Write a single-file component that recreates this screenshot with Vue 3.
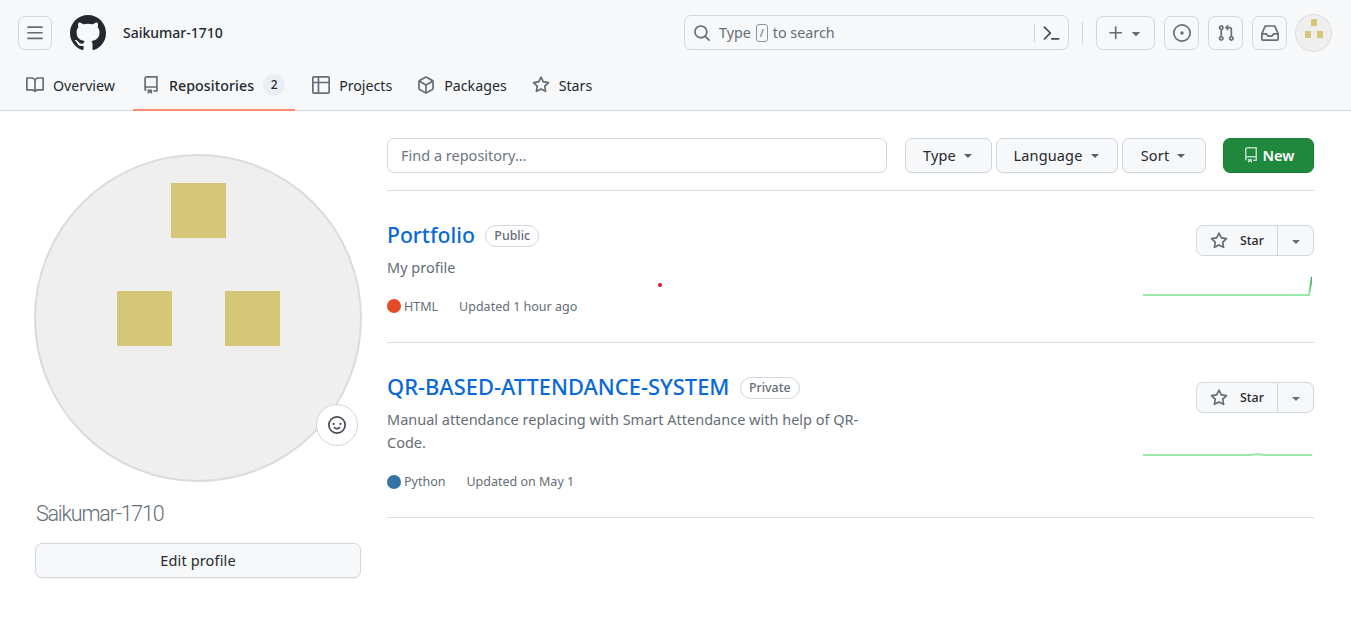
<script setup>
const P = {
  bars: 'M1 2.75A.75.75 0 0 1 1.75 2h12.5a.75.75 0 0 1 0 1.5H1.75A.75.75 0 0 1 1 2.75Zm0 5A.75.75 0 0 1 1.75 7h12.5a.75.75 0 0 1 0 1.5H1.75A.75.75 0 0 1 1 7.75ZM1.75 12h12.5a.75.75 0 0 1 0 1.5H1.75a.75.75 0 0 1 0-1.5Z',
  github: 'M8 0c4.42 0 8 3.58 8 8a8.013 8.013 0 0 1-5.45 7.59c-.4.08-.55-.17-.55-.38 0-.27.01-1.13.01-2.2 0-.75-.25-1.23-.54-1.48 1.78-.2 3.65-.88 3.65-3.95 0-.88-.31-1.59-.82-2.15.08-.2.36-1.02-.08-2.12 0 0-.67-.22-2.2.82-.64-.18-1.32-.27-2-.27-.68 0-1.36.09-2 .27-1.53-1.03-2.2-.82-2.2-.82-.44 1.1-.16 1.92-.08 2.12-.51.56-.82 1.28-.82 2.15 0 3.06 1.86 3.75 3.64 3.95-.23.2-.44.55-.51 1.07-.46.21-1.61.55-2.33-.66-.15-.24-.6-.83-1.23-.82-.67.01-.27.38.01.53.34.19.73.9.82 1.13.16.45.68 1.31 2.69.94 0 .67.01 1.3.01 1.49 0 .21-.15.45-.55.38A7.995 7.995 0 0 1 0 8c0-4.42 3.58-8 8-8Z',
  book: 'M0 1.75A.75.75 0 0 1 .75 1h4.253c1.227 0 2.317.59 3 1.501A3.743 3.743 0 0 1 11.006 1h4.245a.75.75 0 0 1 .75.75v10.5a.75.75 0 0 1-.75.75h-4.507a2.25 2.25 0 0 0-1.591.659l-.622.621a.75.75 0 0 1-1.06 0l-.622-.621A2.25 2.25 0 0 0 5.258 13H.75a.75.75 0 0 1-.75-.75Zm7.251 10.324.004-5.073-.002-2.253A2.25 2.25 0 0 0 5.003 2.5H1.5v9h3.757a3.75 3.75 0 0 1 1.994.574ZM8.755 4.75l-.004 7.322a3.752 3.752 0 0 1 1.992-.572H14.5v-9h-3.495a2.25 2.25 0 0 0-2.25 2.25Z',
  repo: 'M2 2.5A2.5 2.5 0 0 1 4.5 0h8.75a.75.75 0 0 1 .75.75v12.5a.75.75 0 0 1-.75.75h-2.5a.75.75 0 0 1 0-1.5h1.75v-2h-8a1 1 0 0 0-.714 1.7.75.75 0 1 1-1.072 1.05A2.495 2.495 0 0 1 2 11.5Zm10.5-1h-8a1 1 0 0 0-1 1v6.708A2.486 2.486 0 0 1 4.5 9h8ZM5 12.25a.25.25 0 0 1 .25-.25h3.5a.25.25 0 0 1 .25.25v3.25a.25.25 0 0 1-.4.2l-1.45-1.087a.249.249 0 0 0-.3 0L5.4 15.7a.25.25 0 0 1-.4-.2Z',
  table: 'M0 1.75C0 .784.784 0 1.75 0h12.5C15.216 0 16 .784 16 1.75v12.5A1.75 1.75 0 0 1 14.25 16H1.75A1.75 1.75 0 0 1 0 14.25ZM6.5 6.5v8h7.75a.25.25 0 0 0 .25-.25V6.5Zm8-1.5V1.75a.25.25 0 0 0-.25-.25H6.5V5Zm-13 1.5v7.75c0 .138.112.25.25.25H5v-8ZM5 5V1.5H1.75a.25.25 0 0 0-.25.25V5Z',
  pkg: 'm8.878.392 5.25 3.045c.54.314.872.89.872 1.514v6.098a1.75 1.75 0 0 1-.872 1.514l-5.25 3.045a1.75 1.75 0 0 1-1.756 0l-5.25-3.045A1.75 1.75 0 0 1 1 11.049V4.951c0-.624.332-1.201.872-1.514L7.122.392a1.75 1.75 0 0 1 1.756 0ZM7.875 1.69l-4.63 2.685L8 7.133l4.755-2.758-4.63-2.685a.248.248 0 0 0-.25 0ZM2.5 5.677v5.372c0 .09.047.171.125.216l4.625 2.683V8.432Zm6.25 8.271 4.625-2.683a.25.25 0 0 0 .125-.216V5.677L8.75 8.432Z',
  star: 'M8 .25a.75.75 0 0 1 .673.418l1.882 3.815 4.21.612a.75.75 0 0 1 .416 1.279l-3.046 2.97.719 4.192a.751.751 0 0 1-1.088.791L8 12.347l-3.766 1.98a.75.75 0 0 1-1.088-.79l.72-4.194L.818 6.374a.75.75 0 0 1 .416-1.28l4.21-.611L7.327.668A.75.75 0 0 1 8 .25Zm0 2.445L6.615 5.5a.75.75 0 0 1-.564.41l-3.097.45 2.24 2.184a.75.75 0 0 1 .216.664l-.528 3.084 2.769-1.456a.75.75 0 0 1 .698 0l2.77 1.456-.53-3.084a.75.75 0 0 1 .216-.664l2.24-2.183-3.096-.45a.75.75 0 0 1-.564-.41L8 2.694Z',
  search: 'M10.68 11.74a6 6 0 0 1-7.922-8.982 6 6 0 0 1 8.982 7.922l3.04 3.04a.749.749 0 0 1-.326 1.275.749.749 0 0 1-.734-.215ZM11.5 7a4.499 4.499 0 1 0-8.997 0A4.499 4.499 0 0 0 11.5 7Z',
  term: 'm6.354 8.04-4.773 4.773a.75.75 0 1 0 1.061 1.06L7.945 8.57a.75.75 0 0 0 0-1.06L2.642 2.206a.75.75 0 0 0-1.06 1.061L6.353 8.04ZM8.75 12.5a.75.75 0 0 0 0 1.5h6a.75.75 0 0 0 0-1.5h-6Z',
  plus: 'M7.75 2a.75.75 0 0 1 .75.75V7h4.25a.75.75 0 0 1 0 1.5H8.5v4.25a.75.75 0 0 1-1.5 0V8.5H2.75a.75.75 0 0 1 0-1.5H7V2.75A.75.75 0 0 1 7.75 2Z',
  caret: 'm4.427 7.427 3.396 3.396a.25.25 0 0 0 .354 0l3.396-3.396A.25.25 0 0 0 11.396 7H4.604a.25.25 0 0 0-.177.427Z',
  issue: 'M8 9.5a1.5 1.5 0 1 0 0-3 1.5 1.5 0 0 0 0 3ZM8 0a8 8 0 1 1 0 16A8 8 0 0 1 8 0ZM1.5 8a6.5 6.5 0 1 0 13 0 6.5 6.5 0 0 0-13 0Z',
  pr: 'M1.5 3.25a2.25 2.25 0 1 1 3 2.122v5.256a2.251 2.251 0 1 1-1.5 0V5.372A2.25 2.25 0 0 1 1.5 3.25Zm5.677-.177L9.573.677A.25.25 0 0 1 10 .854V2.5h1A2.5 2.5 0 0 1 13.5 5v5.628a2.251 2.251 0 1 1-1.5 0V5a1 1 0 0 0-1-1h-1v1.646a.25.25 0 0 1-.427.177L7.177 3.427a.25.25 0 0 1 0-.354ZM3.75 2.5a.75.75 0 1 0 0 1.5.75.75 0 0 0 0-1.5Zm0 9.5a.75.75 0 1 0 0 1.5.75.75 0 0 0 0-1.5Zm8.25.75a.75.75 0 1 0 1.5 0 .75.75 0 0 0-1.5 0Z',
  inbox: 'M2.8 2.06A1.75 1.75 0 0 1 4.41 1h7.18c.7 0 1.333.417 1.61 1.06l2.74 6.395c.04.093.06.194.06.295v4.5A1.75 1.75 0 0 1 14.25 15H1.75A1.75 1.75 0 0 1 0 13.25v-4.5c0-.101.02-.202.06-.295Zm1.61.44a.25.25 0 0 0-.23.152L1.887 8H4.75a.75.75 0 0 1 .6.3L6.625 10h2.75l1.275-1.7a.75.75 0 0 1 .6-.3h2.863L11.82 2.652a.25.25 0 0 0-.23-.152Zm10.09 7h-2.875l-1.275 1.7a.75.75 0 0 1-.6.3h-3.5a.75.75 0 0 1-.6-.3L4.375 9.5H1.5v3.75c0 .138.112.25.25.25h12.5a.25.25 0 0 0 .25-.25Z',
  smiley: 'M8 0a8 8 0 1 1 0 16A8 8 0 0 1 8 0ZM1.5 8a6.5 6.5 0 1 0 13 0 6.5 6.5 0 0 0-13 0Zm3.82 1.636a.75.75 0 0 1 1.038.175l.007.009c.103.118.22.222.35.31.264.178.683.37 1.285.37.602 0 1.02-.192 1.285-.371.13-.088.247-.192.35-.31l.007-.008a.75.75 0 0 1 1.222.87l-.022-.015c.02.013.021.015.021.015v.001l-.001.002-.002.003-.005.007-.014.019a2.066 2.066 0 0 1-.184.213c-.16.166-.338.316-.53.445-.63.418-1.37.638-2.127.629-.946 0-1.652-.308-2.126-.63a3.331 3.331 0 0 1-.715-.657l-.014-.02-.005-.006-.002-.003v-.002h-.001l.613-.432-.614.43a.75.75 0 0 1 .183-1.044ZM12 7a1 1 0 1 1-2 0 1 1 0 0 1 2 0ZM5 8a1 1 0 1 1 0-2 1 1 0 0 1 0 2Z'
}
const tabs = [
  { label: 'Overview', icon: P.book },
  { label: 'Repositories', icon: P.repo, count: 2, active: true },
  { label: 'Projects', icon: P.table },
  { label: 'Packages', icon: P.pkg },
  { label: 'Stars', icon: P.star }
]
const filters = ['Type', 'Language', 'Sort']
const repos = [
  {
    name: 'Portfolio', vis: 'Public', desc: ['My profile'], lang: 'HTML', color: '#e34c26',
    updated: 'Updated 1 hour ago', spark: 'M0 19 H166 L169 1', cls: 'one'
  },
  {
    name: 'QR-BASED-ATTENDANCE-SYSTEM', vis: 'Private',
    desc: ['Manual attendance replacing with Smart Attendance with help of QR-', 'Code.'],
    lang: 'Python', color: '#3572a5', updated: 'Updated on May 1', spark: 'M0 19 H108 Q114 17.4 120 19 H169', cls: 'two'
  }
]
</script>

<template>
  <div class="page">
    <header class="header">
      <div class="top">
        <button class="iconbtn burger"><svg class="i" viewBox="0 0 16 16"><path :d="P.bars" /></svg></button>
        <svg class="logo" viewBox="0 0 16 16"><path :d="P.github" /></svg>
        <span class="user">Saikumar-1710</span>
        <div class="search">
          <svg class="i" viewBox="0 0 16 16"><path :d="P.search" /></svg>
          <span class="ph">Type <kbd>/</kbd> to search</span>
          <span class="sep"></span>
          <svg class="i term" viewBox="0 0 16 16"><path :d="P.term" /></svg>
        </div>
        <span class="vdiv"></span>
        <button class="iconbtn plus">
          <svg class="i" viewBox="0 0 16 16"><path :d="P.plus" /></svg>
          <svg class="i" viewBox="0 0 16 16"><path :d="P.caret" /></svg>
        </button>
        <button class="iconbtn"><svg class="i" viewBox="0 0 16 16"><path :d="P.issue" /></svg></button>
        <button class="iconbtn"><svg class="i" viewBox="0 0 16 16"><path :d="P.pr" /></svg></button>
        <button class="iconbtn"><svg class="i" viewBox="0 0 16 16"><path :d="P.inbox" /></svg></button>
        <div class="mini">
          <span class="ms a"></span>
          <span class="mrow"><span class="ms"></span><span class="ms"></span></span>
        </div>
      </div>
      <nav class="tabs">
        <a v-for="t in tabs" :key="t.label" class="tab" :class="{ active: t.active }">
          <svg class="i" viewBox="0 0 16 16"><path :d="t.icon" /></svg>
          <span class="tlabel">{{ t.label }}</span>
          <span v-if="t.count" class="count">{{ t.count }}</span>
        </a>
      </nav>
    </header>

    <main class="main">
      <aside class="side">
        <div class="avatar">
          <span class="sq"></span>
          <span class="sqrow"><span class="sq"></span><span class="sq"></span></span>
          <button class="emoji"><svg class="i" viewBox="0 0 16 16"><path :d="P.smiley" /></svg></button>
        </div>
        <div class="name">Saikumar-1710</div>
        <button class="btn edit">Edit profile</button>
      </aside>

      <section class="content">
        <div class="toolbar">
          <div class="find">Find a repository…</div>
          <div class="filters">
            <button v-for="f in filters" :key="f" class="btn filter">
              {{ f }}<svg class="caret" viewBox="0 0 16 16"><path :d="P.caret" /></svg>
            </button>
          </div>
          <button class="newbtn"><svg class="i" viewBox="0 0 16 16"><path :d="P.repo" /></svg>New</button>
        </div>

        <article v-for="r in repos" :key="r.name" class="repo" :class="r.cls">
          <div class="info">
            <div class="title">
              <a class="rname">{{ r.name }}</a>
              <span class="vis">{{ r.vis }}</span>
            </div>
            <p class="desc"><span v-for="d in r.desc" :key="d" class="dline">{{ d }}</span></p>
            <div class="meta">
              <span class="dot" :style="{ background: r.color }"></span>
              <span class="lang">{{ r.lang }}</span>
              <span class="upd">{{ r.updated }}</span>
            </div>
          </div>
          <div class="aside">
            <div class="star">
              <span class="sl"><svg class="i" viewBox="0 0 16 16"><path :d="P.star" /></svg>Star</span>
              <span class="sr"><svg class="i" viewBox="0 0 16 16"><path :d="P.caret" /></svg></span>
            </div>
            <svg class="spark" viewBox="0 0 169 20" width="169" height="20">
              <defs>
                <linearGradient :id="'g-' + r.cls" gradientUnits="userSpaceOnUse" x1="0" y1="20" x2="0" y2="0">
                  <stop offset="0.1" stop-color="#9be9a8" />
                  <stop offset="0.4" stop-color="#6fcf87" />
                  <stop offset="1" stop-color="#30a14e" />
                </linearGradient>
              </defs>
              <path :d="r.spark" :stroke="'url(#g-' + r.cls + ')'" />
            </svg>
          </div>
        </article>
      </section>
    </main>
    <span class="reddot"></span>
  </div>
</template>

<style>
html, body { margin: 0; background: #fff; }
</style>

<style scoped>
.page {
  width: 1351px; height: 630px; overflow: hidden; position: relative;
  font-family: "Noto Sans", "Open Sans", sans-serif; color: #24292f; background: #fff;
}
button { font-family: inherit; padding: 0; margin: 0; cursor: pointer; }
.i { width: 18px; height: 18px; fill: #656d76; flex: none; display: block; }

.header { height: 110px; background: #f6f8fa; border-bottom: 1px solid #d0d7de; }
.top { display: flex; align-items: center; height: 65px; padding: 0 19px 0 18px; }
.iconbtn {
  width: 35px; height: 34px; box-sizing: border-box; border: 1px solid #d0d7de; border-radius: 7px;
  background: transparent; display: flex; align-items: center; justify-content: center; margin-left: 9px;
}
.burger { width: 34px; margin-left: 0; }
.logo { width: 36px; height: 36px; fill: #24292f; margin-left: 18px; flex: none; }
.user { font-size: 14px; font-weight: 500; margin-left: 17px; width: 561px; flex: none; white-space: nowrap; }
.search {
  width: 385px; height: 35px; box-sizing: border-box; border: 1px solid #d0d7de; border-radius: 7px;
  display: flex; align-items: center; padding: 0 8px; flex: none;
}
.ph { font-size: 14.3px; color: #656d76; margin-left: 8px; flex: 1; display: flex; align-items: center; gap: 5px; white-space: nowrap; }
kbd {
  font: inherit; font-size: 11px; width: 10px; height: 16px; line-height: 15px; text-align: center;
  border: 1px solid #8c959f; border-radius: 3px; display: inline-block;
}
.sep { width: 1px; height: 18px; background: #d0d7de; margin-right: 7px; }
.term { fill: #424a53; }
.vdiv { width: 1px; height: 22px; background: #d0d7de; margin: 0 13px; flex: none; }
.plus { width: 59px; margin-left: 0; gap: 2px; margin-right: 0; }

.mini {
  width: 37px; height: 38px; box-sizing: border-box; margin-left: 8px; border-radius: 50%;
  background: #efefef; border: 1px solid #dcdcdc; display: flex; flex-direction: column;
  align-items: center; padding-top: 4px; gap: 5px; flex: none;
}
.ms { width: 6px; height: 7px; background: #d4c777; display: block; }
.mrow { display: flex; gap: 6px; }

.tabs { display: flex; height: 45px; padding-left: 18px; }
.tab {
  display: flex; align-items: center; box-sizing: border-box; height: 46px; padding: 0 8px 4px; margin-right: 9px;
  font-size: 14.2px; color: #24292f; border-bottom: 2px solid transparent;
}
.tab:first-child { margin-right: 10px; }
.tab .i { margin-right: 9px; }
.tab.active { border-bottom-color: #fd8c73; font-weight: 550; padding: 0 10px 4px 9px; margin-right: 9px; }
.tab.active .tlabel { letter-spacing: 0.08px; }
.count {
  font-size: 12px; font-weight: 500; background: #eaeef2; border-radius: 11px; width: 22px; height: 22px;
  line-height: 22px; text-align: center; margin-left: 9px;
}

.main { display: flex; padding-left: 35px; }
.side { width: 326px; flex: none; padding-top: 43px; }
.avatar {
  width: 328px; height: 328px; margin-left: -1px; box-sizing: border-box; border-radius: 50%; background: #efefef; border: 2px solid #d8dce0;
  display: flex; flex-direction: column; align-items: center; padding-top: 27px; gap: 53px; position: relative;
}
.sq { width: 55px; height: 55px; background: #d4c777; display: block; }
.sqrow { display: flex; gap: 53px; }
.emoji {
  position: absolute; right: 2px; bottom: 34px; width: 42px; height: 42px; border-radius: 50%;
  background: #fff; border: 1px solid #d0d7de; display: flex; align-items: center; justify-content: center;
}
.emoji .i { fill: #424a53; }
.name { font-family: Roboto, sans-serif; font-size: 21.5px; font-weight: 300; color: #656d76; margin: 16px 0 13px 1px; line-height: 32px; white-space: nowrap; letter-spacing: -1.2px; }
.btn {
  box-sizing: border-box; height: 35px; border: 1px solid #d0d7de; border-radius: 7px; background: #f6f8fa;
  color: #24292f; font-size: 14.5px; font-weight: 450; display: flex; align-items: center; justify-content: center;
  box-shadow: 0 1px 0 rgba(31, 35, 40, 0.04); padding-bottom: 2px; letter-spacing: 0.15px;
}
.edit { width: 326px; }

.content { width: 927px; margin-left: 26px; flex: none; }
.toolbar {
  display: flex; align-items: flex-start; padding-top: 27px; height: 80px; box-sizing: border-box;
  border-bottom: 1px solid #d8dee4;
}
.find {
  width: 500px; height: 35px; box-sizing: border-box; border: 1px solid #d0d7de; border-radius: 7px;
  padding-left: 13px; line-height: 33px; font-size: 14.5px; color: #6e7781;
}
.filters { display: flex; gap: 4px; margin-left: 18px; }
.filter { gap: 4px; padding-left: 2px; }
.filter:nth-child(1) { width: 87px; }
.filter:nth-child(2) { width: 122px; }
.filter:nth-child(3) { width: 84px; }
.caret { width: 16px; height: 16px; fill: #57606a; }
.newbtn {
  width: 91px; height: 35px; margin-left: 17px; border: 1px solid #1a7f37; border-radius: 7px; background: #1f883d;
  color: #fff; font-size: 14.6px; font-weight: 600; display: flex; align-items: center; justify-content: center; gap: 4px; padding-bottom: 2px;
}
.newbtn .i { fill: rgba(255, 255, 255, 0.7); width: 16px; height: 16px; }

.repo { display: flex; justify-content: space-between; border-bottom: 1px solid #d8dee4; box-sizing: border-box; }
.repo.one { height: 152px; padding-top: 31px; }
.repo.two { height: 175px; padding-top: 31px; }
.info { width: 480px; }
.title { display: flex; align-items: center; height: 28px; white-space: nowrap; }
.rname { font-size: 21.9px; font-weight: 500; color: #0969da; margin-top: -2px; line-height: 28px; }
.one .rname { font-size: 21.2px; }
.vis {
  height: 22px; box-sizing: border-box; border: 1px solid #d0d7de; border-radius: 11px; margin-left: 10.5px;
  padding: 0 8px; font-size: 12.4px; font-weight: 500; color: #656d76; line-height: 20px;
}
.desc { margin: 6px 0 0; font-size: 14.5px; line-height: 23px; color: #656d76; }
.dline { display: block; white-space: nowrap; }
.meta { display: flex; align-items: center; margin-top: 17px; font-size: 12.5px; color: #656d76; height: 20px; white-space: nowrap; }
.two .meta { margin-top: 17.5px; }
.dot { width: 14px; height: 14px; border-radius: 50%; flex: none; }
.lang { margin-left: 3px; }
.upd { margin-left: 21px; }
.aside { width: 171px; display: flex; flex-direction: column; align-items: flex-end; }
.star {
  width: 118px; height: 31px; box-sizing: border-box; border: 1px solid #d0d7de; border-radius: 7px; background: #f6f8fa;
  display: flex; font-size: 12.4px; font-weight: 500; margin-top: 3px;
}
.two .star { margin-top: 8px; }
.sl { width: 81px; display: flex; align-items: center; padding-left: 13px; gap: 12px; box-sizing: border-box; border-right: 1px solid #d0d7de; }
.sr { flex: 1; display: flex; align-items: center; justify-content: center; }
.sr .i { width: 16px; height: 16px; }
.spark { margin: 20px 2px 0 0; display: block; fill: none; }
.spark path { stroke-width: 2; fill: none; }
.two .spark { margin-top: 23px; }
.reddot { position: absolute; left: 658px; top: 282.5px; width: 4px; height: 4px; border-radius: 50%; background: #e3142c; }
</style>
